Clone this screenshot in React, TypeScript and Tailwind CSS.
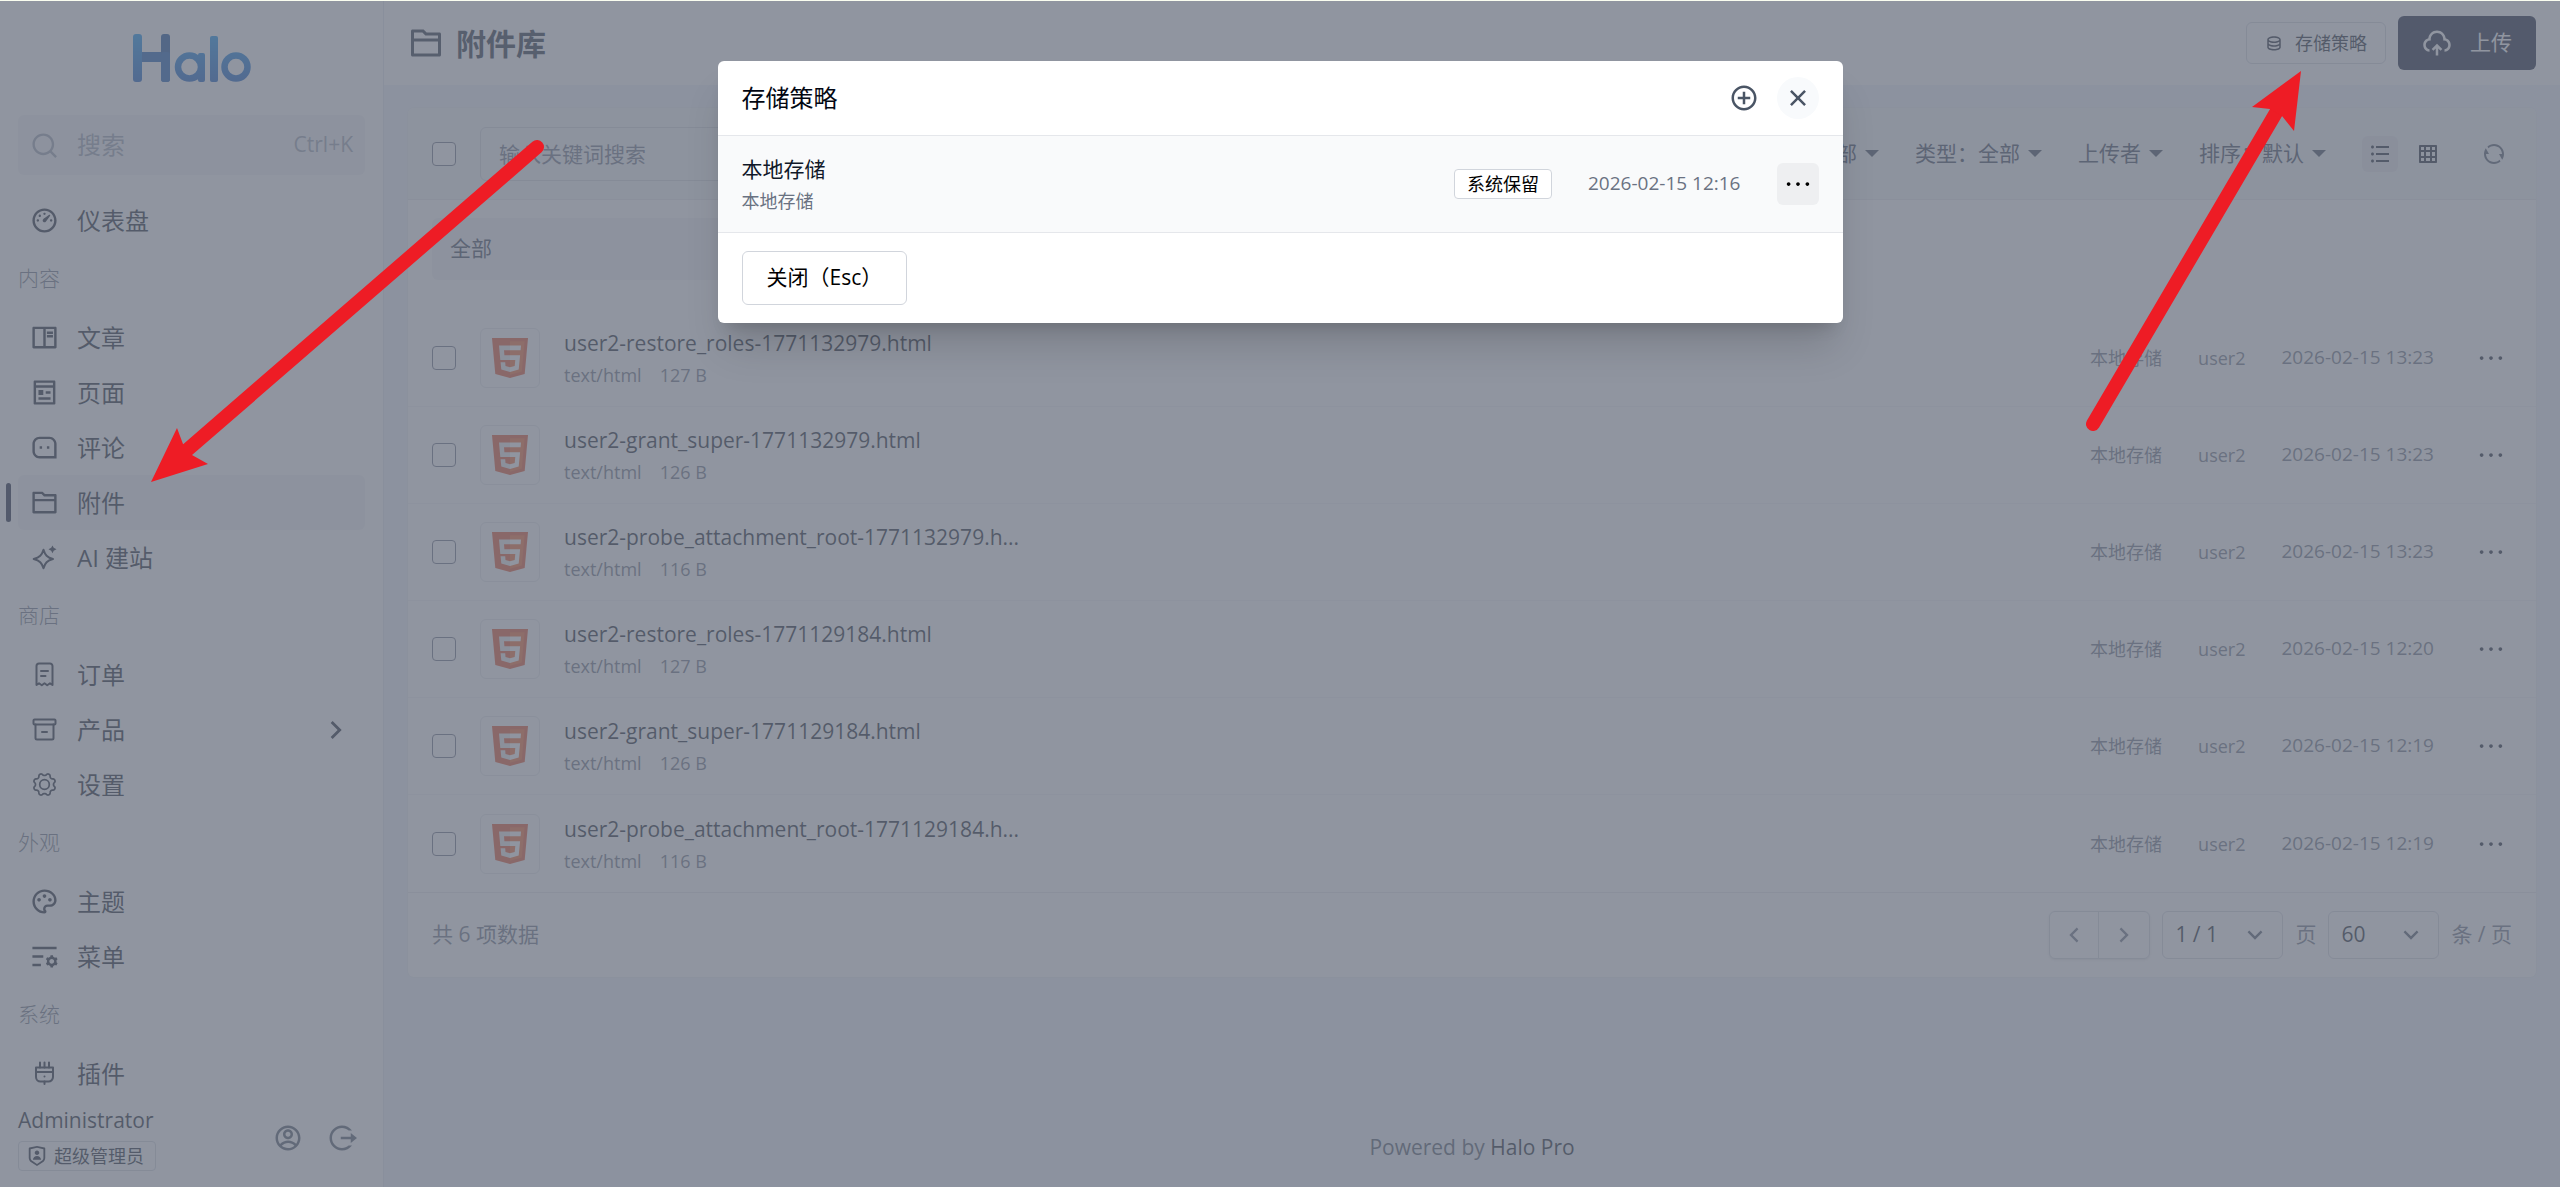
import type { ReactNode } from "react";
import type { IconType } from "react-icons";
import {
  RiAccountCircleLine,
  RiAddCircleLine,
  RiArrowDownSLine,
  RiArrowLeftSLine,
  RiArrowRightSLine,
  RiBookReadLine,
  RiCloseLine,
  RiDashboard3Line,
  RiDatabase2Line,
  RiFolder2Line,
  RiGridLine,
  RiListSettingsLine,
  RiListUnordered,
  RiLogoutCircleRLine,
  RiMessage3Line,
  RiMoreLine,
  RiPagesLine,
  RiPaletteLine,
  RiRefreshLine,
  RiSearchLine,
  RiShieldUserLine,
  RiUploadCloud2Line,
} from "react-icons/ri";

interface MenuItem {
  label: string;
  icon: ReactNode;
  active?: boolean;
  expandable?: boolean;
}

interface MenuGroup {
  title?: string;
  items: MenuItem[];
}

interface Attachment {
  name: string;
  size: string;
  time: string;
}

function menuIcon(Icon: IconType) {
  return <Icon className="size-[29px]" />;
}

// Icons the remix set lacks, drawn on a 24px grid inside the same 29px box
function CustomIcon({ children }: { children: ReactNode }) {
  return (
    <svg
      viewBox="-2.500 -2.500 29 29"
      className="size-[29px]"
      fill="none"
      stroke="currentColor"
      strokeWidth="2"
      strokeLinecap="round"
      strokeLinejoin="round"
      aria-hidden="true"
    >
      {children}
    </svg>
  );
}

function SparkleIcon() {
  return (
    <CustomIcon>
      <path d="M11 4.200c1.600 5.300 3.500 7.600 9.500 9.300-6 1.700-7.900 4-9.500 9.300-1.600-5.300-3.800-7.600-9.800-9.300 6-1.700 8.200-4 9.800-9.300Z" />
      <path d="M20 0l1.200 2.300L24 3.800l-2.800 1.400L20 7.800l-1.300-2.600L16 3.800l2.700-1.500Z" fill="currentColor" stroke="none" />
    </CustomIcon>
  );
}

function ReceiptIcon() {
  return (
    <CustomIcon>
      <path d="M4 22.500V3.500a2.500 2.500 0 0 1 2.500-2.500h11a2.500 2.500 0 0 1 2.500 2.500v19l-2.500-1.700-2.800 2-2.700-2-2.700 2-2.800-2Z" />
      <path d="M8.500 8.500h7M8.500 13.500h4.500" />
    </CustomIcon>
  );
}

function ArchiveIcon() {
  return (
    <CustomIcon>
      <rect x="1" y="2" width="22" height="5" rx="1" />
      <path d="M3 7v13.500a1.500 1.500 0 0 0 1.500 1.500h15a1.500 1.500 0 0 0 1.500-1.500V7M9.500 14.500h5" />
    </CustomIcon>
  );
}

function PlugIcon() {
  return (
    <CustomIcon>
      <path d="M3.500 6h17v9.500a4.500 4.500 0 0 1-4.500 4.500h-8a4.500 4.500 0 0 1-4.500-4.500ZM3.500 10.500h17" />
      <path d="M7.500 1v5M12 1v5M16.500 1v5M12 20v2.500M12 15v.1" />
    </CustomIcon>
  );
}

const gearOutline = Array.from({ length: 96 }, (_, i) => {
  const angle = (i / 96) * Math.PI * 2;
  const wave = Math.cos(8 * angle);
  const radius = 10.1 - 1.1 * Math.sign(wave) * Math.sqrt(Math.abs(wave));
  return `${12 + radius * Math.sin(angle)},${12 - radius * Math.cos(angle)}`;
}).join(" ");

function GearIcon() {
  return (
    <CustomIcon>
      <polygon points={gearOutline} strokeWidth="1.700" />
      <circle cx="12" cy="12" r="4.800" strokeWidth="1.700" />
    </CustomIcon>
  );
}

function HaloLogo() {
  return (
    <svg viewBox="0 0 118 48" className="h-12 w-[118px]" role="img" aria-label="Halo">
      <defs>
        <linearGradient id="halo-blue" gradientUnits="userSpaceOnUse" x1="0" y1="0" x2="0" y2="48">
          <stop offset="0" stopColor="#0a8fee" />
          <stop offset="1" stopColor="#0a55bd" />
        </linearGradient>
      </defs>
      <rect x="0" y="18" width="37" height="10" fill="#0f53b0" />
      <rect x="28" y="0" width="9" height="48" rx="3" fill="#0e4a98" />
      <rect x="28" y="18" width="9" height="30" rx="3" fill="#0f53b0" />
      <rect x="0" y="0" width="9" height="48" rx="3" fill="url(#halo-blue)" />
      <circle cx="56.500" cy="33" r="11.500" fill="none" stroke="url(#halo-blue)" strokeWidth="6.500" />
      <rect x="65" y="19" width="7" height="29" rx="2" fill="url(#halo-blue)" />
      <rect x="77" y="2" width="8" height="46" rx="2" fill="url(#halo-blue)" />
      <circle cx="103" cy="33" r="11.500" fill="none" stroke="url(#halo-blue)" strokeWidth="6.500" />
    </svg>
  );
}

function Html5Icon() {
  return (
    <svg viewBox="0 0 36 40" className="h-10 w-9" aria-hidden="true">
      <path d="M0 0h36l-3.300 36L18 40 3.300 36Z" fill="#e44d26" />
      <path d="M18 3.200v33.500l11.800-3.200L32.600 3.200Z" fill="#f16529" />
      <path d="M7 7.500h11v4.700h-6l.4 5H18v4.700H8.300Z" fill="#ebebeb" />
      <path d="M8.600 24.200h4.600l.3 3.900 4.500 1.200v4.800l-8.700-2.500Z" fill="#ebebeb" />
      <path d="M29 7.500H18v4.700h10.600ZM28.100 17.200H18v4.700h5.300l-.6 6.200-4.700 1.200v4.800l8.700-2.500Z" fill="#fff" />
    </svg>
  );
}

const menu: MenuGroup[] = [
  { items: [{ label: "仪表盘", icon: menuIcon(RiDashboard3Line) }] },
  {
    title: "内容",
    items: [
      { label: "文章", icon: menuIcon(RiBookReadLine) },
      { label: "页面", icon: menuIcon(RiPagesLine) },
      { label: "评论", icon: menuIcon(RiMessage3Line) },
      { label: "附件", icon: menuIcon(RiFolder2Line), active: true },
      { label: "AI 建站", icon: <SparkleIcon /> },
    ],
  },
  {
    title: "商店",
    items: [
      { label: "订单", icon: <ReceiptIcon /> },
      { label: "产品", icon: <ArchiveIcon />, expandable: true },
      { label: "设置", icon: <GearIcon /> },
    ],
  },
  {
    title: "外观",
    items: [
      { label: "主题", icon: menuIcon(RiPaletteLine) },
      { label: "菜单", icon: menuIcon(RiListSettingsLine) },
    ],
  },
  { title: "系统", items: [{ label: "插件", icon: <PlugIcon /> }] },
];

const attachments: Attachment[] = [
  { name: "user2-restore_roles-1771132979.html", size: "127 B", time: "2026-02-15 13:23" },
  { name: "user2-grant_super-1771132979.html", size: "126 B", time: "2026-02-15 13:23" },
  { name: "user2-probe_attachment_root-1771132979.h...", size: "116 B", time: "2026-02-15 13:23" },
  { name: "user2-restore_roles-1771129184.html", size: "127 B", time: "2026-02-15 12:20" },
  { name: "user2-grant_super-1771129184.html", size: "126 B", time: "2026-02-15 12:19" },
  { name: "user2-probe_attachment_root-1771129184.h...", size: "116 B", time: "2026-02-15 12:19" },
];

const filters = ["存储策略：全部", "类型：全部", "上传者", "排序：默认"];

function Sidebar() {
  return (
    <aside className="flex w-96 shrink-0 flex-col border-r border-[#e3e8ee] bg-white">
      <div className="flex justify-center py-[33px]">
        <HaloLogo />
      </div>
      <div className="px-[18px]">
        <button
          type="button"
          className="flex h-[60px] w-full items-center rounded-md bg-[#f3f4f6] px-3 text-gray-400"
        >
          <RiSearchLine className="size-[29px]" />
          <span className="ml-[18px] text-2xl">搜索</span>
          <span className="ml-auto text-[21px]">Ctrl+K</span>
        </button>
      </div>
      <nav className="min-h-0 flex-1 overflow-hidden px-[18px] pt-[18px]" aria-label="主菜单">
        {menu.map((group, i) => (
          <div key={i}>
            {group.title && (
              <div className="flex h-[62px] items-center text-[21px] font-light text-gray-500">{group.title}</div>
            )}
            {group.items.map(item => (
              <a
                key={item.label}
                href="#"
                className={
                  item.active
                    ? "relative flex h-[55px] items-center rounded-md bg-[#f3f4f6] px-3 text-2xl text-gray-900"
                    : "relative flex h-[55px] items-center rounded-md px-3 text-2xl text-gray-900"
                }
              >
                {item.active && (
                  <span className="absolute top-2 -left-3 h-[39px] w-[5px] rounded-sm bg-[#0e1731]" />
                )}
                {item.icon}
                <span className="ml-[18px]">{item.label}</span>
                {item.expandable && <RiArrowRightSLine className="ml-auto size-[34px]" />}
              </a>
            ))}
          </div>
        ))}
      </nav>
      <div className="flex h-[86px] items-center justify-between px-[18px] pb-3">
        <div className="flex flex-col items-start gap-1.5">
          <span className="text-[21px] leading-[30px] text-gray-900">Administrator</span>
          <span className="flex h-[30px] items-center gap-1.5 rounded border border-gray-300 px-[7px] text-lg leading-none text-gray-900">
            <RiShieldUserLine className="size-[22px]" />
            <span className="pr-1">超级管理员</span>
          </span>
        </div>
        <div className="flex gap-6 pr-2 text-gray-600">
          <button type="button" aria-label="个人中心">
            <RiAccountCircleLine className="size-[30px]" />
          </button>
          <button type="button" aria-label="退出登录">
            <RiLogoutCircleRLine className="size-[30px]" />
          </button>
        </div>
      </div>
    </aside>
  );
}

function PageHeader() {
  return (
    <header className="flex h-[84px] items-center justify-between bg-white px-6">
      <h1 className="flex items-center gap-3 text-[30px] font-bold text-gray-800">
        <RiFolder2Line className="size-9" />
        附件库
      </h1>
      <div className="flex items-center gap-3">
        <button
          type="button"
          className="flex h-[42px] items-center gap-3 rounded-md border border-gray-300 px-[18px] text-lg text-gray-900"
        >
          <RiDatabase2Line className="size-[18px]" />
          存储策略
        </button>
        <button
          type="button"
          className="flex h-[54px] items-center gap-[18px] rounded-md bg-[#0e1731] px-6 text-[21px] text-white"
        >
          <RiUploadCloud2Line className="size-[30px]" />
          上传
        </button>
      </div>
    </header>
  );
}

function Checkbox({ label }: { label: string }) {
  return (
    <input
      type="checkbox"
      aria-label={label}
      className="size-6 shrink-0 appearance-none rounded-sm border border-gray-500 bg-white"
    />
  );
}

function Toolbar() {
  return (
    <div className="flex h-[92px] items-center border-b border-gray-200 bg-[#f2f5f8] px-6">
      <Checkbox label="全选" />
      <input
        type="text"
        aria-label="输入关键词搜索"
        placeholder="输入关键词搜索"
        className="ml-6 h-[54px] w-[420px] rounded-md border border-gray-300 px-[18px] text-[21px] placeholder:text-gray-500"
      />
      <div className="ml-auto flex items-center gap-9 text-[21px] text-gray-700">
        {filters.map(filter => (
          <button key={filter} type="button" className="flex items-center gap-2">
            {filter}
            <svg viewBox="0 0 14 7" className="h-[7px] w-3.5" aria-hidden="true">
              <path d="M0 0h14L7 7Z" fill="currentColor" />
            </svg>
          </button>
        ))}
        <div className="flex gap-3 text-gray-900">
          <button type="button" aria-label="列表" className="rounded-md bg-gray-200 p-1.5">
            <RiListUnordered className="size-6" />
          </button>
          <button type="button" aria-label="网格" className="p-1.5">
            <RiGridLine className="size-6" />
          </button>
        </div>
        <button type="button" aria-label="刷新" className="pr-1.5 text-gray-600">
          <RiRefreshLine className="size-6" />
        </button>
      </div>
    </div>
  );
}

function AttachmentRow({ item }: { item: Attachment }) {
  return (
    <li className="flex h-[97px] items-center border-b border-gray-100 px-6 last:border-0">
      <Checkbox label={item.name} />
      <div className="ml-6 flex size-[60px] items-center justify-center rounded-md border border-gray-200">
        <Html5Icon />
      </div>
      <div className="ml-6 pt-0.5">
        <div className="text-[21px] leading-8 text-gray-900">{item.name}</div>
        <div className="flex gap-[18px] text-lg leading-8 text-gray-500">
          <span>text/html</span>
          <span>{item.size}</span>
        </div>
      </div>
      <div className="ml-auto flex items-center gap-9 text-lg text-gray-500">
        <span>本地存储</span>
        <span>user2</span>
        <span className="text-[19px]">{item.time}</span>
        <button type="button" aria-label="更多" className="flex size-[42px] items-center justify-center text-gray-900">
          <RiMoreLine className="size-[30px]" />
        </button>
      </div>
    </li>
  );
}

function PageSelect({ label, value, className }: { label: string; value: string; className: string }) {
  return (
    <div className={className}>
      <select
        aria-label={label}
        defaultValue={value}
        className="h-12 w-full appearance-none rounded-md border border-gray-300 bg-white pl-3 text-[21px] text-gray-900"
      >
        <option>{value}</option>
      </select>
      <RiArrowDownSLine className="pointer-events-none absolute top-2.5 right-3.5 size-7 text-gray-600" />
    </div>
  );
}

function Pagination() {
  return (
    <footer className="flex h-[85px] items-center justify-between border-t border-gray-200 px-6 text-[21px] text-gray-500">
      <span>共 6 项数据</span>
      <div className="flex items-center gap-3">
        <div className="flex h-12 divide-x divide-gray-300 rounded-md border border-gray-300 shadow-sm">
          <button type="button" aria-label="上一页" className="flex w-[49px] items-center justify-center">
            <RiArrowLeftSLine className="size-7" />
          </button>
          <button type="button" aria-label="下一页" className="flex w-[50px] items-center justify-center">
            <RiArrowRightSLine className="size-7" />
          </button>
        </div>
        <PageSelect label="页码" value="1 / 1" className="relative w-[121px]" />
        <span>页</span>
        <PageSelect label="每页条数" value="60" className="relative w-[111px]" />
        <span>条 / 页</span>
      </div>
    </footer>
  );
}

function PolicyModal() {
  return (
    <section
      role="dialog"
      aria-modal="true"
      aria-labelledby="policy-title"
      className="h-fit w-full max-w-[1125px] overflow-hidden rounded-md bg-white shadow-[0_30px_38px_-8px_rgba(0,0,0,0.15),0_12px_15px_-9px_rgba(0,0,0,0.15)]"
    >
      <header className="flex h-[75px] items-center justify-between border-b border-gray-200 px-6">
        <h2 id="policy-title" className="text-2xl text-gray-950">
          存储策略
        </h2>
        <div className="flex items-center gap-[18px] text-gray-600">
          <button type="button" aria-label="新增">
            <RiAddCircleLine className="size-[30px]" />
          </button>
          <button
            type="button"
            aria-label="关闭"
            className="flex size-[42px] items-center justify-center rounded-full bg-[#f8fafc]"
          >
            <RiCloseLine className="size-[30px]" />
          </button>
        </div>
      </header>
      <div className="flex h-[97px] items-center justify-between border-b border-gray-200 bg-[#f9fafb] px-6">
        <div className="pt-0.5">
          <div className="text-[21px] leading-8 text-gray-900">本地存储</div>
          <div className="text-lg leading-8 text-gray-500">本地存储</div>
        </div>
        <div className="flex items-center gap-9 text-lg text-gray-500">
          <span className="flex h-[30px] items-center rounded border border-gray-300 bg-white px-3 leading-none text-black">
            系统保留
          </span>
          <span className="text-[19px]">2026-02-15 12:16</span>
          <button
            type="button"
            aria-label="更多"
            className="flex size-[42px] items-center justify-center rounded-md bg-[#eeeff1] text-black"
          >
            <RiMoreLine className="size-[30px]" />
          </button>
        </div>
      </div>
      <footer className="flex h-[90px] items-center px-6">
        <button type="button" className="h-[54px] rounded-md border border-gray-300 px-6 text-[21px] text-black">
          关闭（Esc）
        </button>
      </footer>
    </section>
  );
}

// Red pointers drawn over everything: one to the 附件 menu entry, one to the 存储策略 button
function Pointers() {
  return (
    <>
      <svg
        viewBox="151 135 396 348"
        className="pointer-events-none absolute top-[134px] left-[151px] h-[348px] w-[396px]"
        aria-hidden="true"
      >
        <path d="M537 147 186 451" stroke="#ee1c25" strokeWidth="14" strokeLinecap="round" />
        <path d="M151 482 177 428 183 444 192 455 208 464Z" fill="#ee1c25" />
      </svg>
      <svg
        viewBox="2080 70 224 364"
        className="pointer-events-none absolute top-[69px] right-64 h-[364px] w-56"
        aria-hidden="true"
      >
        <path d="M2093 424 2277 111" stroke="#ee1c25" strokeWidth="14" strokeLinecap="round" />
        <path d="M2301 71 2252 107 2270 109 2282 116 2294 131Z" fill="#ee1c25" />
      </svg>
    </>
  );
}

export default function App() {
  return (
    <div className='relative flex h-screen overflow-hidden border-t border-[#fafdf0] bg-[#eff4f9] font-["Open_Sans","Noto_Sans_CJK_SC",sans-serif]'>
      <Sidebar />
      <div className="flex min-w-0 flex-1 flex-col">
        <PageHeader />
        <main className="px-6 pt-[23px]">
          <div className="overflow-hidden rounded-md bg-white ring-1 ring-[#eaeff4]">
            <Toolbar />
            <div className="px-6 pt-[18px] pb-[30px]">
              <div className="grid grid-cols-4">
                <button
                  type="button"
                  className="h-[62px] rounded-md bg-gray-100 px-[18px] text-left text-[21px] text-gray-700"
                >
                  全部
                </button>
              </div>
            </div>
            <ul>
              {attachments.map(item => (
                <AttachmentRow key={item.name} item={item} />
              ))}
            </ul>
            <Pagination />
          </div>
        </main>
        <footer className="mt-auto pb-6 text-center text-[21px] text-gray-600">
          Powered by{" "}
          <a href="#" className="text-gray-900">
            Halo Pro
          </a>
        </footer>
      </div>
      <div className="absolute inset-0 flex justify-center bg-[#6b7280]/75 pt-[60px]">
        <PolicyModal />
      </div>
      <Pointers />
    </div>
  );
}
